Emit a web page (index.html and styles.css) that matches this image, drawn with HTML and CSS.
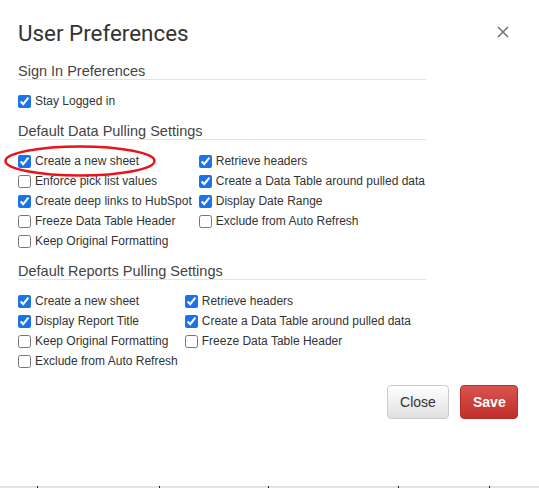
FILE: index.html
```html
<!DOCTYPE html>
<html>
<head>
<meta charset="utf-8">
<link rel="stylesheet" href="styles.css">
</head>
<body>
<div class="dialog">
  <div class="header">
    <h1 class="title">User Preferences</h1>
    <button class="close-x" aria-label="Close">
      <svg width="12" height="12" viewBox="0 0 12 12"><path d="M1 1L11 11M11 1L1 11" stroke="#757575" stroke-width="1.6" fill="none"/></svg>
    </button>
  </div>

  <section class="section">
    <h2 class="sec-title">Sign In Preferences</h2>
    <div class="cols">
      <div class="col">
        <label class="row"><input type="checkbox" checked><span>Stay Logged in</span></label>
      </div>
    </div>
  </section>

  <section class="section">
    <h2 class="sec-title">Default Data Pulling Settings</h2>
    <div class="cols">
      <div class="col">
        <label class="row marked"><input type="checkbox" checked><span>Create a new sheet</span>
          <svg class="ring" width="154" height="34" viewBox="0 0 154 34"><ellipse cx="77" cy="17" rx="74.5" ry="14.5" fill="none" stroke="#e8141c" stroke-width="2.5"/></svg>
        </label>
        <label class="row"><input type="checkbox"><span>Enforce pick list values</span></label>
        <label class="row"><input type="checkbox" checked><span>Create deep links to HubSpot</span></label>
        <label class="row"><input type="checkbox"><span>Freeze Data Table Header</span></label>
        <label class="row"><input type="checkbox"><span>Keep Original Formatting</span></label>
      </div>
      <div class="col">
        <label class="row"><input type="checkbox" checked><span>Retrieve headers</span></label>
        <label class="row"><input type="checkbox" checked><span>Create a Data Table around pulled data</span></label>
        <label class="row"><input type="checkbox" checked><span>Display Date Range</span></label>
        <label class="row"><input type="checkbox"><span>Exclude from Auto Refresh</span></label>
      </div>
    </div>
  </section>

  <section class="section">
    <h2 class="sec-title">Default Reports Pulling Settings</h2>
    <div class="cols">
      <div class="col">
        <label class="row"><input type="checkbox" checked><span>Create a new sheet</span></label>
        <label class="row"><input type="checkbox" checked><span>Display Report Title</span></label>
        <label class="row"><input type="checkbox"><span>Keep Original Formatting</span></label>
        <label class="row"><input type="checkbox"><span>Exclude from Auto Refresh</span></label>
      </div>
      <div class="col">
        <label class="row"><input type="checkbox" checked><span>Retrieve headers</span></label>
        <label class="row"><input type="checkbox" checked><span>Create a Data Table around pulled data</span></label>
        <label class="row"><input type="checkbox"><span>Freeze Data Table Header</span></label>
      </div>
    </div>
  </section>

  <div class="actions">
    <button class="btn btn-default">Close</button>
    <button class="btn btn-danger">Save</button>
  </div>
</div>
<div class="ruler">
  <span class="seg s1"></span><span class="tick"></span>
  <span class="seg s2"></span><span class="tick"></span>
  <span class="seg s3"></span><span class="tick"></span>
  <span class="seg s4"></span><span class="tick"></span>
  <span class="seg s5"></span><span class="tick"></span>
  <span class="seg rest"></span>
</div>
</body>
</html>
```
FILE: styles.css
```css
html, body {
  margin: 0;
  padding: 0;
  background: #fff;
}
body {
  width: 539px;
  height: 488px;
  display: flex;
  flex-direction: column;
  overflow: hidden;
  font-family: "Liberation Sans", Arial, sans-serif;
  color: #333;
}
.dialog {
  padding: 0 21px 0 18px;
}
.header {
  display: flex;
  align-items: center;
  justify-content: space-between;
  height: 64px;
}
.title {
  margin: 0;
  font-family: Roboto, "Liberation Sans", sans-serif;
  font-weight: 400;
  font-size: 22.4px;
  color: #333;
  padding-top: 1px;
}
.close-x {
  border: 0;
  background: none;
  padding: 0;
  margin-right: 9px;
  width: 12px;
  height: 12px;
  display: flex;
}
.section {
  width: 408px;
  margin-bottom: 13px;
}
.sec-title {
  margin: 0;
  font-weight: 400;
  font-size: 14.5px;
  color: #444;
  line-height: 15px;
  padding-bottom: 0;
  border-bottom: 1px solid #e2e2e2;
}
.cols {
  display: flex;
  gap: 7px;
  padding-top: 11px;
}
.col {
  display: flex;
  flex-direction: column;
}
.row {
  position: relative;
  display: flex;
  align-items: center;
  height: 20px;
  font-size: 12px;
  color: #333;
  white-space: nowrap;
}
.row input {
  width: 13px;
  height: 13px;
  margin: 0 4px 0 0;
  accent-color: #1a73e8;
}
.ring {
  position: absolute;
  left: -15px;
  top: -7px;
  pointer-events: none;
}
.actions {
  display: flex;
  justify-content: flex-end;
  gap: 11px;
  margin-top: 14px;
}
.btn {
  height: 34px;
  border-radius: 4px;
  font-family: "Liberation Sans", Arial, sans-serif;
  font-size: 14px;
  padding: 0 12px;
}
.btn-default {
  width: 62px;
  color: #333;
  border: 1px solid #ccc;
  background: linear-gradient(#fff, #e0e0e0);
}
.btn-danger {
  width: 58px;
  color: #fff;
  border: 1px solid #b92c28;
  background: linear-gradient(#d9534f, #c12e2a);
  font-weight: 700;
}
.ruler {
  margin-top: auto;
  display: flex;
  height: 2px;
  background: #e4e4e4;
}
.seg.s1 { width: 37px; }
.seg.s2 { width: 121px; }
.seg.s3 { width: 108px; }
.seg.s4 { width: 129px; }
.seg.s5 { width: 90px; }
.tick {
  width: 1px;
  background: #222;
}
```
